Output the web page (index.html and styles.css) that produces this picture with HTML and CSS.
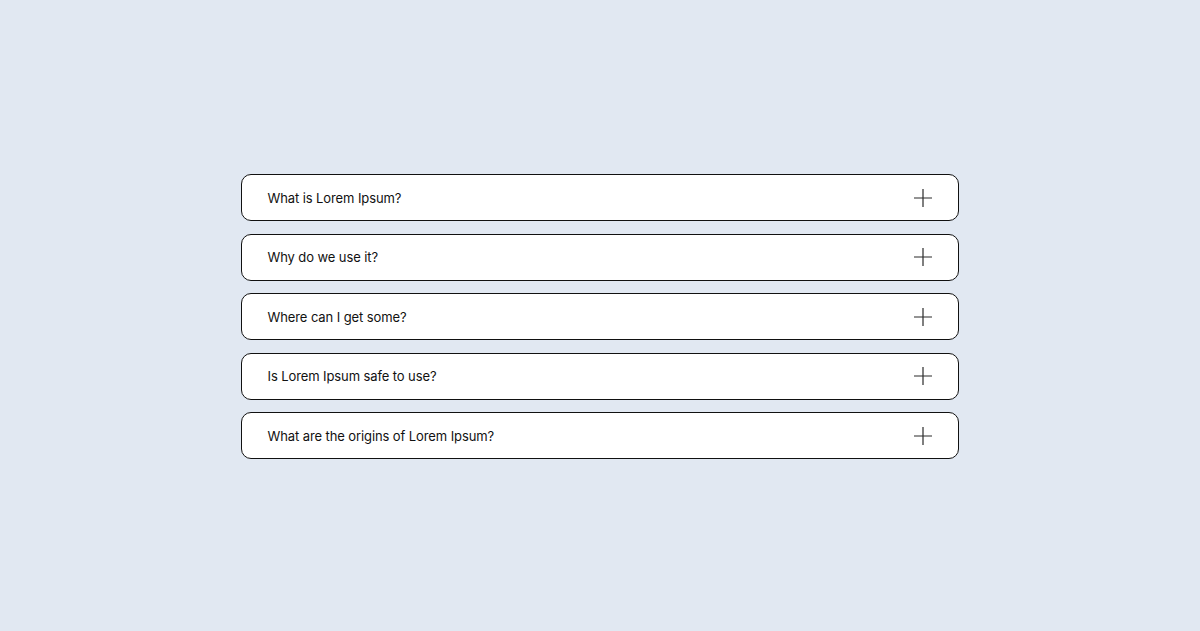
FILE: index.html
```html
<!DOCTYPE html>
<html>
<head>
<meta charset="utf-8">
<link rel="stylesheet" href="styles.css">
</head>
<body>
<main class="page">
  <section class="faq">
    <div class="item"><span class="q">What is Lorem Ipsum?</span><svg class="plus" width="18" height="18" viewBox="0 0 18 18"><path d="M9 0V18M0 9H18" stroke="#2b2b2b" stroke-width="1.2" fill="none"/></svg></div>
    <div class="item"><span class="q">Why do we use it?</span><svg class="plus" width="18" height="18" viewBox="0 0 18 18"><path d="M9 0V18M0 9H18" stroke="#2b2b2b" stroke-width="1.2" fill="none"/></svg></div>
    <div class="item"><span class="q">Where can I get some?</span><svg class="plus" width="18" height="18" viewBox="0 0 18 18"><path d="M9 0V18M0 9H18" stroke="#2b2b2b" stroke-width="1.2" fill="none"/></svg></div>
    <div class="item"><span class="q">Is Lorem Ipsum safe to use?</span><svg class="plus" width="18" height="18" viewBox="0 0 18 18"><path d="M9 0V18M0 9H18" stroke="#2b2b2b" stroke-width="1.2" fill="none"/></svg></div>
    <div class="item"><span class="q">What are the origins of Lorem Ipsum?</span><svg class="plus" width="18" height="18" viewBox="0 0 18 18"><path d="M9 0V18M0 9H18" stroke="#2b2b2b" stroke-width="1.2" fill="none"/></svg></div>
  </section>
</main>
</body>
</html>
```
FILE: styles.css
```css
html, body {
  margin: 0;
  padding: 0;
}
body {
  background: #e1e8f2;
  font-family: "Inter", "Liberation Sans", sans-serif;
}
.page {
  box-sizing: border-box;
  height: 631px;
  padding-top: 2px;
  display: flex;
  align-items: center;
  justify-content: center;
}
.faq {
  width: 718px;
  margin-right: 1px;
  display: flex;
  flex-direction: column;
  gap: 12.5px;
}
.item {
  box-sizing: border-box;
  height: 47px;
  background: #fff;
  border: 1px solid #111;
  border-radius: 10px;
  padding: 0 26px;
  display: flex;
  align-items: center;
  justify-content: space-between;
}
.q {
  font-size: 13px;
  color: #111;
  letter-spacing: -0.1px;
}
.plus {
  display: block;
}
```
